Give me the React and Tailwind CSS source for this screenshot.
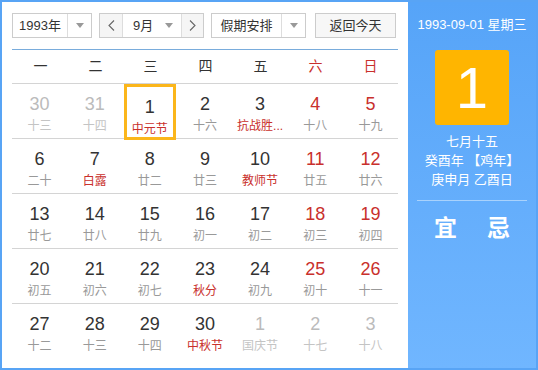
import React from 'react';

const font = { fontFamily: '"Liberation Sans", Arial, "Noto Sans CJK SC", sans-serif' };

const weekdays = ['一', '二', '三', '四', '五', '六', '日'];

// [day, lunar, type] type: 'o' other month, 'f' festival, 'n' normal
const rows = [
  [[30, '十三', 'o'], [31, '十四', 'o'], [1, '中元节', 'f'], [2, '十六'], [3, '抗战胜...', 'f'], [4, '十八'], [5, '十九']],
  [[6, '二十'], [7, '白露', 'f'], [8, '廿二'], [9, '廿三'], [10, '教师节', 'f'], [11, '廿五'], [12, '廿六']],
  [[13, '廿七'], [14, '廿八'], [15, '廿九'], [16, '初一'], [17, '初二'], [18, '初三'], [19, '初四']],
  [[20, '初五'], [21, '初六'], [22, '初七'], [23, '秋分', 'f'], [24, '初九'], [25, '初十'], [26, '十一']],
  [[27, '十二'], [28, '十三'], [29, '十四'], [30, '中秋节', 'f'], [1, '国庆节', 'o'], [2, '十七', 'o'], [3, '十八', 'o']],
];

const Arrow = () => (
  <svg width="8" height="5" viewBox="0 0 8 5">
    <path d="M0 0h8L4 5z" fill="#999" />
  </svg>
);

const Chevron = ({ dir }) => (
  <svg width="7" height="11" viewBox="0 0 7 11">
    <path d={dir === 'left' ? 'M6 0.5L1 5.5l5 5' : 'M1 0.5l5 5-5 5'} stroke="#666" strokeWidth="1.1" fill="none" />
  </svg>
);

const DayCell = ({ day, lunar, type, col, selected }) => {
  const weekend = col >= 5;
  let numColor = 'text-[#333]';
  let lunarColor = 'text-[#999]';
  if (type === 'o') {
    numColor = 'text-[#bbb]';
    lunarColor = 'text-[#c4c4c4]';
  } else {
    if (weekend) numColor = 'text-[#c9302c]';
    if (type === 'f') lunarColor = 'text-[#c9302c]';
  }
  return (
    <div className="flex justify-center h-full">
      <div
        className={`flex flex-col items-center w-[52px] h-full pt-[9px] ${selected ? 'border-[3px] border-[#fbb61b] pt-[6px]' : ''}`}
      >
        <div className={`text-[18px] leading-[22px] ${numColor}`}>{day}</div>
        <div className={`text-[12px] leading-[16px] mt-[3px] whitespace-nowrap ${lunarColor}`}>{lunar}</div>
      </div>
    </div>
  );
};

export default function App() {
  return (
    <div className="w-[538px] h-[370px] border-2 border-[#58a4f5] flex bg-white overflow-hidden" style={font}>
      {/* Left: calendar */}
      <div className="w-[406px] pl-[10px] pr-[10px] pt-[11px] shrink-0">
        {/* Controls */}
        <div className="flex items-center h-[25px] text-[13px] text-[#333]">
          <div className="flex h-full w-[80px] border border-[#ccc]">
            <div className="flex-1 flex items-center justify-center">1993年</div>
            <div className="w-[24px] border-l border-[#ddd] flex items-center justify-center">
              <Arrow />
            </div>
          </div>
          <div className="flex h-full w-[105px] border border-[#ccc] ml-[7px]">
            <div className="w-[23px] bg-[#f5f5f5] border-r border-[#ddd] flex items-center justify-center">
              <Chevron dir="left" />
            </div>
            <div className="flex-1 flex items-center pl-[10px] pr-[8px] justify-between">
              <span>9月</span>
              <Arrow />
            </div>
            <div className="w-[22px] bg-[#f5f5f5] border-l border-[#ddd] flex items-center justify-center">
              <Chevron dir="right" />
            </div>
          </div>
          <div className="flex h-full w-[95px] border border-[#ccc] ml-[7px]">
            <div className="flex-1 flex items-center justify-center">假期安排</div>
            <div className="w-[24px] border-l border-[#ddd] flex items-center justify-center">
              <Arrow />
            </div>
          </div>
          <div className="h-full w-[81px] ml-[9px] border border-[#ccc] bg-[#f7f7f7] flex items-center justify-center">
            返回今天
          </div>
        </div>

        {/* Blue divider */}
        <div className="h-px bg-[#79acdc] mt-[11px]"></div>

        {/* Week header */}
        <div className="grid grid-cols-7 h-[34px] border-b border-[#d4d4d4] items-center text-[14px] pl-[1px]">
          {weekdays.map((w, i) => (
            <div key={w} className={`text-center ${i >= 5 ? 'text-[#c9302c]' : 'text-[#333]'}`}>{w}</div>
          ))}
        </div>

        {/* Days */}
        {rows.map((row, r) => (
          <div
            key={r}
            className={`grid grid-cols-7 h-[55px] ${r < rows.length - 1 ? 'border-b border-[#d4d4d4]' : ''}`}
          >
            {row.map(([day, lunar, type], c) => (
              <DayCell key={c} day={day} lunar={lunar} type={type} col={c} selected={r === 0 && c === 2} />
            ))}
          </div>
        ))}
      </div>

      {/* Right: detail panel */}
      <div className="flex-1 bg-gradient-to-b from-[#56a4f8] to-[#70b6ff] flex flex-col items-center text-white pt-[14px]">
        <div className="text-[13px] leading-[18px] whitespace-nowrap">1993-09-01 星期三</div>
        <div className="w-[74px] h-[75px] bg-[#ffb500] rounded-[3px] mt-[16px] flex items-center justify-center text-[58px] leading-none">
          1
        </div>
        <div className="mt-[7px] text-[13px] leading-[19px] text-center">
          <div>七月十五</div>
          <div className="whitespace-nowrap">癸酉年 【鸡年】</div>
          <div>庚申月 乙酉日</div>
        </div>
        <div className="w-[110px] h-px bg-[#a9d2fc] mt-[11px]"></div>
        <div className="flex gap-[30px] mt-[12px] text-[23px] font-bold leading-[30px]">
          <span>宜</span>
          <span>忌</span>
        </div>
      </div>
    </div>
  );
}
